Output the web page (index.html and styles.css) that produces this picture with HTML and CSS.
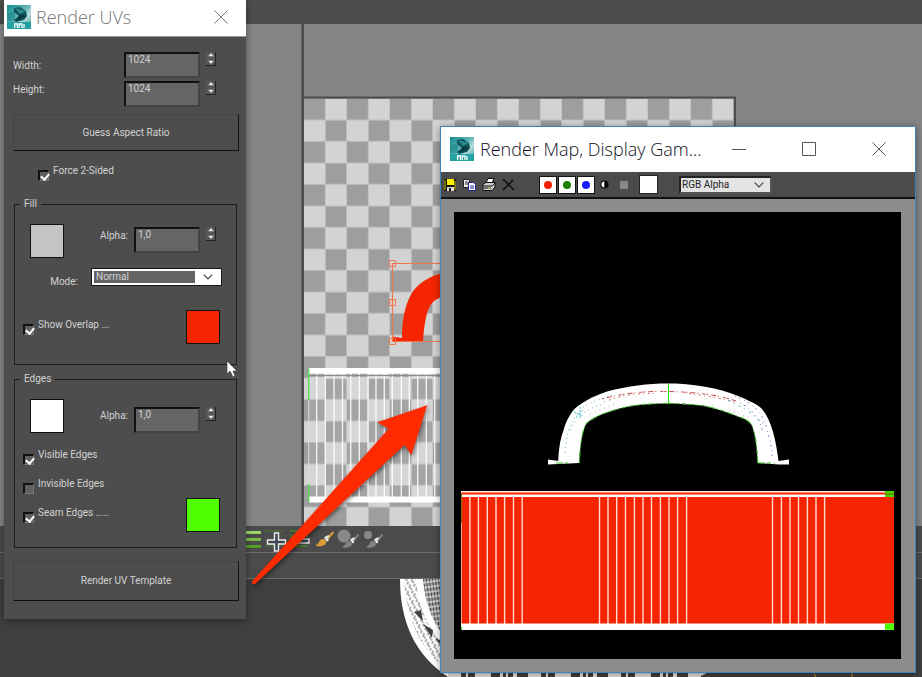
FILE: index.html
```html
<!DOCTYPE html>
<html lang="en">
<head>
<meta charset="utf-8">
<title>Render UVs</title>
<link rel="stylesheet" href="styles.css">
</head>
<body>
<svg class="defs" aria-hidden="true">
  <defs>
    <linearGradient id="teal" x1="0" y1="0" x2="1" y2="1">
      <stop offset="0" stop-color="#0f8c8e"/><stop offset=".45" stop-color="#5fb3b3"/><stop offset=".65" stop-color="#b9dcdc"/><stop offset="1" stop-color="#1c9799"/>
    </linearGradient>
    <linearGradient id="lime" x1="0" y1="0" x2="0" y2="1">
      <stop offset="0" stop-color="#a4dc6c"/><stop offset="1" stop-color="#4f9a1e"/>
    </linearGradient>
    <symbol id="app" viewBox="0 0 24 24">
      <rect width="24" height="24" fill="url(#teal)"/>
      <path d="M0 9 8 6v10H0z" fill="#0e7f82" opacity=".5"/>
      <path d="M0 17h24v7H0z" fill="#23a0a1"/>
      <path d="M7 3 13 2 19 6 20 11 17 15 9 17 7 15 12 11 7 7z" fill="#0d565b"/>
      <path d="M8 3 19 6 13 9z" fill="#2d8b8e"/><path d="M13 9 20 11 9 16z" fill="#083b42"/>
      <path d="M7.600 23v-4h2.800v4M12.200 23v-4H15v4M17 23v-4" fill="none" stroke="#fff" stroke-width="1.300"/>
    </symbol>
    <symbol id="spin" viewBox="0 0 8 4"><path d="M4 0 6.800 3.200H1.200z" fill="#e4e4e4"/></symbol>
    <symbol id="close" viewBox="0 0 14 14"><path d="M.5.5l13 13M13.500.5l-13 13" fill="none" stroke="currentColor"/></symbol>
    <symbol id="chev" viewBox="0 0 10 6"><path d="M.7.7 5 5 9.300.7" fill="none" stroke="#444" stroke-width="1.200"/></symbol>
    <symbol id="brush" viewBox="0 0 20 16">
      <path d="M12 7 19 0 20 2 14 9z" fill="currentColor"/>
      <path d="M11 7 15 5M11 6l3 4" stroke="#e8e8e8" stroke-width="2.500"/>
      <path d="M1 14c5 0 3-6 8-6 5 1 4 6-1 7-3 1-6 0-7-1z" fill="currentColor"/>
    </symbol>
    <pattern id="check" x="304" y="98.700" width="43" height="43" patternUnits="userSpaceOnUse">
      <rect width="43" height="43" fill="#d3d3d3"/>
      <rect width="21" height="21" fill="#9e9e9e"/><rect x="21.500" y="21.500" width="21" height="21" fill="#9e9e9e"/>
      <path d="M0 21.300h43M21.300 0v43M0 42.800h43M42.800 0v43" stroke="#bdbdbd" stroke-width=".9"/>
    </pattern>
    <pattern id="mesh" width="6" height="5" patternUnits="userSpaceOnUse" patternTransform="rotate(-8)">
      <rect width="6" height="5" fill="#3f3f3f"/><path d="M0 1h6M1 0v5M4 0v5" stroke="#fff" stroke-width="1"/>
    </pattern>
    <pattern id="rim" width="7" height="7" patternUnits="userSpaceOnUse" patternTransform="rotate(18)">
      <rect width="7" height="7" fill="#fff"/><path d="M1 0v3M4 2v4M6 5v2" stroke="#444" stroke-width=".9"/>
    </pattern>
  </defs>
</svg>

<main class="editor">
  <header class="editor-head"></header>
  <section class="canvas" aria-label="UV canvas">
    <svg class="fill" aria-label="UV layout">
      <g transform="translate(0 -24)">
        <path d="M302.700 24v502" stroke="#4d4d4d" stroke-width="2.600"/>
        <rect x="304" y="96.500" width="432" height="450" fill="#4d4d4d"/>
        <rect x="304" y="98.700" width="429.700" height="450" fill="url(#check)"/>
        <path d="M309 373h424v126H309z" fill="#fff" opacity=".08"/>
        <path d="M316.700 373v126M325.300 373v126M334 373v126M342.500 373v126M350.700 373v126M359.300 373v126M368 373v126M376 373v126M384.300 373v126M392.300 373v126M401.300 373v126M409.300 373v126M417.700 373v126M426.300 373v126M434.700 373v126" stroke="#fff" stroke-width="1.400" opacity=".85"/>
        <path d="M309 370.800h424M309 499.500h424" stroke="#fff" stroke-width="5.800"/>
        <path d="M309 375.500h424" stroke="#8d8d8d"/><path d="M309 378h424" stroke="#eee"/>
        <path d="M308.700 369v31M308.700 484v18" stroke="#4fe04f" stroke-width="1.400"/>
        <path d="M308.700 400v84" stroke="#ddd"/>
        <path d="M392 336.500 402 338C402 322 404 307 411.700 293.300 417 284 430 276 441 273.500V297.500C427 301 425 318 423 341.500H392z" fill="#f42500"/>
        <g fill="none" stroke="#f0764e"><path d="M441 263.500H392.500v78H441" stroke-width="1.200"/><path d="M389.500 260.500h6v6h-6zM389.500 299.500h6v6h-6zM389.500 338.500h6v6h-6z"/></g>
      </g>
    </svg>
  </section>
  <section class="brushes" aria-label="Brush tools">
    <svg width="15" height="20" aria-label="Loop"><path d="M0 2h15v3H0zM0 9h15v3H0zM0 16h15v3H0z" fill="url(#lime)"/></svg>
    <svg width="22" height="20" aria-label="Grow"><path d="M1 2h18M1 17h18" stroke="#467a2a"/><path d="M10.500 4h4v7h7v4h-7v7h-4v-7h-7v-4h7z" fill="#3e4552" stroke="#eee" stroke-width="1.400"/></svg>
    <svg width="22" height="20" aria-label="Shrink"><path d="M1 2h18M1 7h18M1 17h18" stroke="#467a2a" stroke-width="2"/><path d="M3 10h17v4H3z" fill="#3e4552" stroke="#ddd" stroke-width="1.400"/></svg>
    <svg class="gold" width="20" height="20" aria-label="Paint"><use href="#brush" width="20" height="16" y="2"/></svg>
    <svg class="ash" width="22" height="20" aria-label="Paint larger"><circle cx="7" cy="7" r="6.500" fill="#888"/><use href="#brush" width="18" height="16" x="4" y="4"/></svg>
    <svg class="ash" width="22" height="20" aria-label="Paint smaller"><circle cx="6" cy="6" r="4" fill="#888"/><use href="#brush" width="18" height="16" x="3" y="4"/></svg>
  </section>
  <section class="status"></section>
  <section class="viewport" aria-label="Viewport">
    <svg class="fill" aria-label="Wireframe">
      <g transform="translate(0 -579)">
        <path d="M400 579h60v98h-12C415 655 400 622 400 579z" fill="#fff"/>
        <path d="M404 579h12c2 30 14 55 38 78v18C422 654 407 622 404 579z" fill="url(#rim)"/>
        <path d="M423 579h40v76C438 635 426 612 423 579z" fill="url(#mesh)"/>
        <path d="M414 612l9 9-2-11zM423 624l9 14 1-8zM435 638l10 12v-8z" fill="#3f3f3f"/>
        <path d="M448 675h258" stroke="#ddd" stroke-width="5" stroke-dasharray="13 5 2 7 16 9 3 3 2 5 4 11"/>
        <path d="M686 672c5 5 15 6 22 0" fill="#ddd"/>
        <path d="M814 673l2 5M852 673v5" stroke="#a89b25"/>
      </g>
    </svg>
  </section>
</main>

<section class="window dialog" aria-label="Render UVs">
  <header class="dialog-title">
    <svg width="24" height="24" aria-hidden="true"><use href="#app"/></svg>
    <h1>Render UVs</h1>
    <button class="plain" aria-label="Close"><svg width="14" height="14"><use href="#close"/></svg></button>
  </header>
  <div class="dialog-body">
    <div class="size">
      <div class="size-labels"><label for="w">Width:</label><label for="h">Height:</label></div>
      <div class="size-fields">
        <div class="number"><input id="w" type="text" value="1024"><span class="spin"><button aria-label="Width up"><svg><use href="#spin"/></svg></button><button aria-label="Width down"><svg class="down"><use href="#spin"/></svg></button></span></div>
        <div class="number"><input id="h" type="text" value="1024"><span class="spin"><button aria-label="Height up"><svg><use href="#spin"/></svg></button><button aria-label="Height down"><svg class="down"><use href="#spin"/></svg></button></span></div>
      </div>
    </div>
    <button class="wide">Guess Aspect Ratio</button>
    <label class="tick force"><input type="checkbox" checked><span>Force 2-Sided</span></label>

    <fieldset class="group fill-group">
      <legend>Fill</legend>
      <div class="row">
        <button class="swatch silver" aria-label="Fill color"></button>
        <label class="right" for="fa">Alpha:</label>
        <div class="number short"><input id="fa" type="text" value="1,0"><span class="spin"><button aria-label="Fill alpha up"><svg><use href="#spin"/></svg></button><button aria-label="Fill alpha down"><svg class="down"><use href="#spin"/></svg></button></span></div>
      </div>
      <div class="row mode">
        <label for="mode">Mode:</label>
        <div class="select"><select id="mode"><option>Normal</option></select><svg><use href="#chev"/></svg></div>
      </div>
      <div class="row between">
        <label class="tick"><input type="checkbox" checked><span>Show Overlap ...</span></label>
        <button class="swatch red" aria-label="Overlap color"></button>
      </div>
    </fieldset>

    <fieldset class="group edge-group">
      <legend>Edges</legend>
      <div class="row edge-alpha">
        <button class="swatch white" aria-label="Edge color"></button>
        <label class="right" for="ea">Alpha:</label>
        <div class="number short"><input id="ea" type="text" value="1,0"><span class="spin"><button aria-label="Edge alpha up"><svg><use href="#spin"/></svg></button><button aria-label="Edge alpha down"><svg class="down"><use href="#spin"/></svg></button></span></div>
      </div>
      <div class="edge-options">
        <div class="ticks">
          <label class="tick"><input type="checkbox" checked><span>Visible Edges</span></label>
          <label class="tick"><input type="checkbox"><span>Invisible Edges</span></label>
          <label class="tick"><input type="checkbox" checked><span>Seam Edges .....</span></label>
        </div>
        <button class="swatch green" aria-label="Seam color"></button>
      </div>
    </fieldset>
    <button class="wide template">Render UV Template</button>
  </div>
</section>

<section class="window map" aria-label="Render Map">
  <header class="map-title">
    <svg width="24" height="24" aria-hidden="true"><use href="#app"/></svg>
    <h2>Render Map, Display Gam...</h2>
    <div class="controls">
      <button class="plain" aria-label="Minimize"><svg width="14" height="14"><path d="M0 7.500h14" stroke="currentColor"/></svg></button>
      <button class="plain" aria-label="Maximize"><svg width="14" height="14"><path d="M.5.5h13v13H.5z" fill="none" stroke="currentColor"/></svg></button>
      <button class="plain" aria-label="Close"><svg width="14" height="14"><use href="#close"/></svg></button>
    </div>
  </header>
  <div class="map-tools">
    <div class="files">
      <button class="plain" aria-label="Save"><svg width="13" height="13"><path d="M0 1h12v12H0z" fill="#111"/><path d="M3 1h7v6H3z" fill="#f8f000"/><path d="M1 2v10M11 3v9" stroke="#d9d000"/><path d="M3 9h7v4H3z" fill="#ddd"/><path d="M5 10h2v3H5z" fill="#111"/></svg></button>
      <button class="plain" aria-label="Copy"><svg width="13" height="13"><path d="M.5 1.500h6v8h-6z" fill="#eee" stroke="#222"/><path d="M2 4h3M2 6h3" stroke="#222"/><path d="M5.500 4.500h5l2 2v6h-7z" fill="#fff" stroke="#22229c"/><path d="M7 8h4M7 10h4" stroke="#22229c"/></svg></button>
      <button class="plain" aria-label="Print"><svg width="14" height="13"><path d="M4 5 6 .5h6L10 5z" fill="#fff" stroke="#111"/><path d="M1 6 4 4.500h9V9l-3 3.500H1z" fill="#ccc" stroke="#111"/><path d="M1 8h9l3-3M2 10h7" fill="none" stroke="#111"/><path d="M6 10h2" stroke="#eedd20"/></svg></button>
      <button class="plain" aria-label="Clear"><svg width="13" height="13"><path d="M1 1 12 12M11 2 1 12" stroke="#0b0b0b" stroke-width="1.500"/></svg></button>
    </div>
    <div class="channels">
      <button class="chan" aria-label="Red channel"><i class="dot r"></i></button>
      <button class="chan" aria-label="Green channel"><i class="dot g"></i></button>
      <button class="chan" aria-label="Blue channel"><i class="dot b"></i></button>
    </div>
    <button class="plain" aria-label="Alpha channel"><svg width="9" height="9"><path d="M4.500.5a4 4 0 0 0 0 8z" fill="#060606"/><path d="M4.500 1.500a3 3 0 0 0 0 6z" fill="#fff"/><path d="M4.500.5a4 4 0 0 1 0 8z" fill="#060606"/></svg></button>
    <button class="mono" aria-label="Monochrome"></button>
    <button class="pick" aria-label="Background color"></button>
    <div class="rgb"><select aria-label="Channel display"><option>RGB Alpha</option></select><svg><use href="#chev"/></svg></div>
  </div>
  <div class="map-body">
    <svg viewBox="454 212 447 447" aria-label="Rendered UV template">
      <rect x="454" y="212" width="447" height="447"/>
      <path d="M548 459.500 558.200 461C559 448 560 440 563.300 431 566 421 571 411 578 406 586 400 596 395 607 391.500 628 386 648 383.500 668 383.500S709 386 730 393C743 398 754 402 761 408 771 418 776 440 778.500 461L789 459.500V464.500H779L757.700 463C757 448 756 436 751.700 425 748 419 742 418 736.700 416 722 410 708 406 697 405 678 403 660 403 647 404.300 633 405 620 408 610 411.500 598 415 590 420 586 424 581 434 580 450 579.300 463L548 464.500z" fill="#fff"/>
      <g fill="none">
        <path d="M757.700 463C757 448 756 436 751.700 425 748 419 742 418 736.700 416 722 410 708 406 697 405 678 403 660 403 647 404.300 633 405 620 408 610 411.500 598 415 590 420 586 424 581 434 580 450 579.300 463M556 463h12M758 463h17" stroke="#35b51f" stroke-width="1.100" stroke-dasharray="7 2 4 3 2 2"/>
        <path d="M668.500 383.500v20" stroke="#35dc25" stroke-width="1.200"/>
        <path d="M602 399C624 393 645 391 668 391.500S716 394 736 401" stroke="#c44848" stroke-dasharray="2 3 5 2 1 4 3 1"/>
        <path d="M604 402C625 394 640 393 656 393.500M684 393C704 395 724 399 737 403" stroke="#d36c6c" stroke-dasharray="1 4 2 3"/>
        <path d="M574 412 583 416M576 417 583 410M580 407v12" stroke="#55c8cc" stroke-dasharray="2 1"/>
        <path d="M565 453C567 432 571 418 582 408 592 401 601 399 612 395M570 430C575 418 584 409 604 404" stroke="#62b8b8" stroke-dasharray="1 4 1 3"/>
        <path d="M735 396C755 404 763 413 767 430 771 443 772 450 772 456M740 403C754 410 760 420 763 432" stroke="#897bd2" stroke-dasharray="1 3 2 4"/>
        <path d="M728 400C744 408 755 415 764 425" stroke="#4aa" stroke-dasharray="2 4 1 5"/>
        <path d="M590 414 614 404M705 398 716 409M729 410 752 419" stroke="#999" stroke-width=".7" stroke-dasharray="1 4"/>
      </g>
      <rect x="461" y="491" width="433" height="139" fill="#f42500"/>
      <path d="M469.900 495v129M478.400 495v129M487.300 495v129M496 495v129M504.600 495v129M513.500 495v129M522.200 495v129M599.500 495v129M608 495v129M616.700 495v129M625.500 495v129M634.400 495v129M643 495v129M651.500 495v129M660.400 495v129M669 495v129M677.600 495v129M686.600 495v129M772.500 495v129M781.400 495v129M790 495v129M798.500 495v129M807.400 495v129M816 495v129M824.600 495v129" stroke="#ffd9d2" stroke-width="1.400"/>
      <path d="M461.500 491v139" stroke="#f9a08f"/>
      <path d="M461 491.700h433" stroke="#ffe4df" stroke-width="1.400"/><path d="M461 495.700h433" stroke="#fff" stroke-width="2.600"/>
      <path d="M461 626.800h433" stroke="#fff" stroke-width="6.500"/>
      <path d="M461.500 493v30" stroke="#8c6800"/><path d="M461.500 627v3" stroke="#3c0"/>
      <path d="M885 491h9v6h-9z" fill="#43da00"/><path d="M885 494h9" stroke="#8a5a00"/><path d="M885 623.500h9v6.500h-9z" fill="#4dff00"/>
    </svg>
  </div>
</section>

<svg class="pointer-arrow" viewBox="0 0 180 184" aria-hidden="true"><path d="M2.500 179 138.700 26.700 127.300 20.300 177.300 3.300 161.300 53.300 154.700 42.700 5 182A2 2 0 0 1 2.500 179z" fill="#ff2a00"/></svg>
<svg class="cursor" viewBox="0 0 12 18" aria-hidden="true"><path d="M1 1v13l3-3 3 6 2-1-2-5h4z" fill="#fff" stroke="#333" stroke-width=".6"/></svg>
</body>
</html>
```
FILE: styles.css
```css
* { box-sizing: border-box; }

body {
  margin: 0;
  min-height: 100vh;
  overflow: hidden;
  background: #3f3f3f;
  color: #d2d2d2;
  font: 10px/12px Roboto, "DejaVu Sans Condensed", sans-serif;
}

button, input, select { font: inherit; color: inherit; }
button { padding: 0; border: 0; background: none; }
h1, h2 { margin: 0; font: 300 18px/24px "Open Sans", "Noto Sans", sans-serif; white-space: nowrap; }
svg { display: block; }
.defs { position: absolute; width: 0; height: 0; }
.fill { width: 100%; height: 100%; }

/* Editor behind the windows */
.editor { display: flex; flex-direction: column; height: 100vh; }
.editor-head { height: 24px; background: #4d4d4d; }
.canvas { flex: 1; min-height: 0; background: #858585; }
.brushes {
  display: flex;
  gap: 3px;
  align-items: center;
  height: 26px;
  padding-left: 246px;
  background: #4b4b4b;
}
.brushes svg { overflow: visible; }
.gold { color: #d99a3a; }
.ash { color: #828282; }
.status { height: 27px; background: #4b4b4b; border-top: 1px solid #6e6e6e; border-bottom: 1px solid #6e6e6e; }
.viewport { height: 98px; }

/* Floating windows */
.window { position: absolute; box-shadow: 0 1px 7px rgba(0, 0, 0, .4); }
.plain { display: flex; align-items: center; justify-content: center; }

.dialog { left: 4px; top: 0; width: 242px; background: #4d4d4d; }
.dialog-title {
  display: flex;
  align-items: center;
  gap: 5px;
  height: 37px;
  padding: 0 18px 2px 3px;
  background: #fff;
  border-bottom: 1px solid #999;
  color: #777;
}
.dialog-title h1 { flex: 1; }
.dialog-body { padding: 15px 7px 18px 9px; }

.size { display: flex; justify-content: space-between; padding-right: 23px; }
.size-labels { display: flex; flex-direction: column; gap: 12px; padding-top: 8px; }
.size-fields { display: flex; flex-direction: column; gap: 3px; }
.number { display: flex; align-items: flex-start; gap: 6px; }
.number input {
  width: 76px;
  height: 26px;
  padding: 0 0 11px 2px;
  border: 2px solid #111;
  border-right-color: #444;
  border-bottom-color: #444;
  background: #656565;
}
.number.short input { width: 66px; }
.spin {
  display: flex;
  flex-direction: column;
  width: 10px;
  height: 14px;
  background: #575757;
  border-right: 1px solid #222;
  border-bottom: 1px solid #222;
}
.spin button { flex: 1; display: flex; align-items: center; justify-content: center; }
.spin svg { width: 8px; height: 4px; }
.spin .down { transform: rotate(180deg); }

.wide {
  display: block;
  width: 226px;
  height: 37px;
  margin-top: 7px;
  border: 1px solid #444;
  border-right-color: #111;
  border-bottom-color: #111;
}
.template { height: 40px; margin-top: 13px; }

.tick { display: flex; gap: 4px; align-items: flex-start; height: 17px; }
.tick input {
  appearance: none;
  width: 11px;
  height: 11px;
  margin: 5px 0 0;
  border: 1px solid #777;
  border-top: 2px solid #111;
  border-left: 2px solid #111;
  background: #606060;
}
.tick input:checked::before {
  content: "";
  display: block;
  width: 4px;
  height: 6px;
  margin: 0 0 0 2px;
  border: solid #fff;
  border-width: 0 2px 2px 0;
  transform: rotate(40deg);
}
.force { margin: 14px 0 0 25px; }

.group {
  margin: 0 0 0 1px;
  width: 223px;
  min-width: 0;
  padding: 0;
  border: 1px solid #1c1c1c;
}
.group legend { margin-left: 5px; padding: 0 4px; line-height: 12px; }
.fill-group { height: 167px; margin-top: 16px; }
.edge-group { height: 175px; margin-top: 8px; }
.row { display: flex; align-items: flex-start; padding: 14px 15px 0 15px; }
.row .right { flex: 1; padding: 6px 6px 0 0; text-align: right; }
.row .number { padding: 3px 5px 0 0; }
.edge-alpha .right { padding-top: 11px; }
.edge-alpha .number { padding-top: 8px; }
.row.mode { justify-content: flex-end; gap: 14px; padding-top: 11px; }
.mode label { padding-top: 7px; }
.row.between { justify-content: space-between; padding: 22px 16px 0 8px; }
.between .tick { padding-top: 9px; }
.edge-options { display: flex; align-items: flex-end; justify-content: space-between; padding: 16px 16px 0 8px; }
.ticks { display: flex; flex-direction: column; gap: 12px; padding-bottom: 8px; }
.between .tick { height: 26px; }

.swatch { width: 34px; height: 34px; border: 1px solid #111; }
.silver { background: #c4c4c4; }
.white { background: #fff; }
.red { background: #f42500; }
.green { background: #50ff00; }

.select { position: relative; }
.select select {
  display: block;
  appearance: none;
  width: 129px;
  height: 16px;
  padding: 0 2px;
  border: 2px solid #fff;
  border-right-width: 26px;
  outline: 1px solid #181818;
  border-radius: 0;
  background: #636363;
  line-height: 12px;
}
.select svg { position: absolute; right: 8px; top: 5px; width: 10px; height: 6px; pointer-events: none; }

.map { left: 440px; top: 126px; width: 476px; border: 1px solid #4283b8; background: #8c8c8c; }
.map-title {
  display: flex;
  align-items: center;
  gap: 6px;
  height: 45px;
  padding: 0 29px 2px 9px;
  background: #fff;
  color: #111122;
}
.controls { display: flex; gap: 56px; margin-left: auto; color: #555; }
.map-tools {
  display: flex;
  align-items: center;
  height: 27px;
  padding-left: 3px;
  background: #4b4b4b;
  border-bottom: 2px solid #111;
}
.files { display: flex; gap: 6px; }
.channels { display: flex; gap: 1px; margin: 0 5px 0 24px; }
.chan {
  display: flex;
  align-items: center;
  justify-content: center;
  width: 18px;
  height: 18px;
  background: #fff;
  border: 1px solid #111;
}
.dot { width: 8px; height: 8px; border-radius: 50%; }
.r { background: #f42000; }
.g { background: #188000; }
.b { background: #1a1aff; }
.mono { width: 8px; height: 8px; margin: 0 11px; background: #888; }
.pick { width: 19px; height: 19px; background: #fff; border: 1px solid #222; }
.rgb { position: relative; margin-left: 21px; }
.rgb select {
  display: block;
  appearance: none;
  width: 93px;
  height: 18px;
  padding: 0 1px;
  border: 2px solid #222;
  border-right-color: #555;
  border-bottom-color: #555;
  border-radius: 0;
  background: #e4e4e4;
  color: #222;
}
.rgb svg { position: absolute; right: 8px; top: 6px; width: 10px; height: 6px; pointer-events: none; }
.map-body { padding: 13px 14px 13px 13px; }
.map-body svg { width: 100%; }

.pointer-arrow { position: absolute; left: 250px; top: 402px; width: 180px; height: 184px; filter: drop-shadow(1px 2px 2px rgba(0, 0, 0, .5)); }
.cursor { position: absolute; left: 226px; top: 360px; width: 12px; height: 18px; }
```
